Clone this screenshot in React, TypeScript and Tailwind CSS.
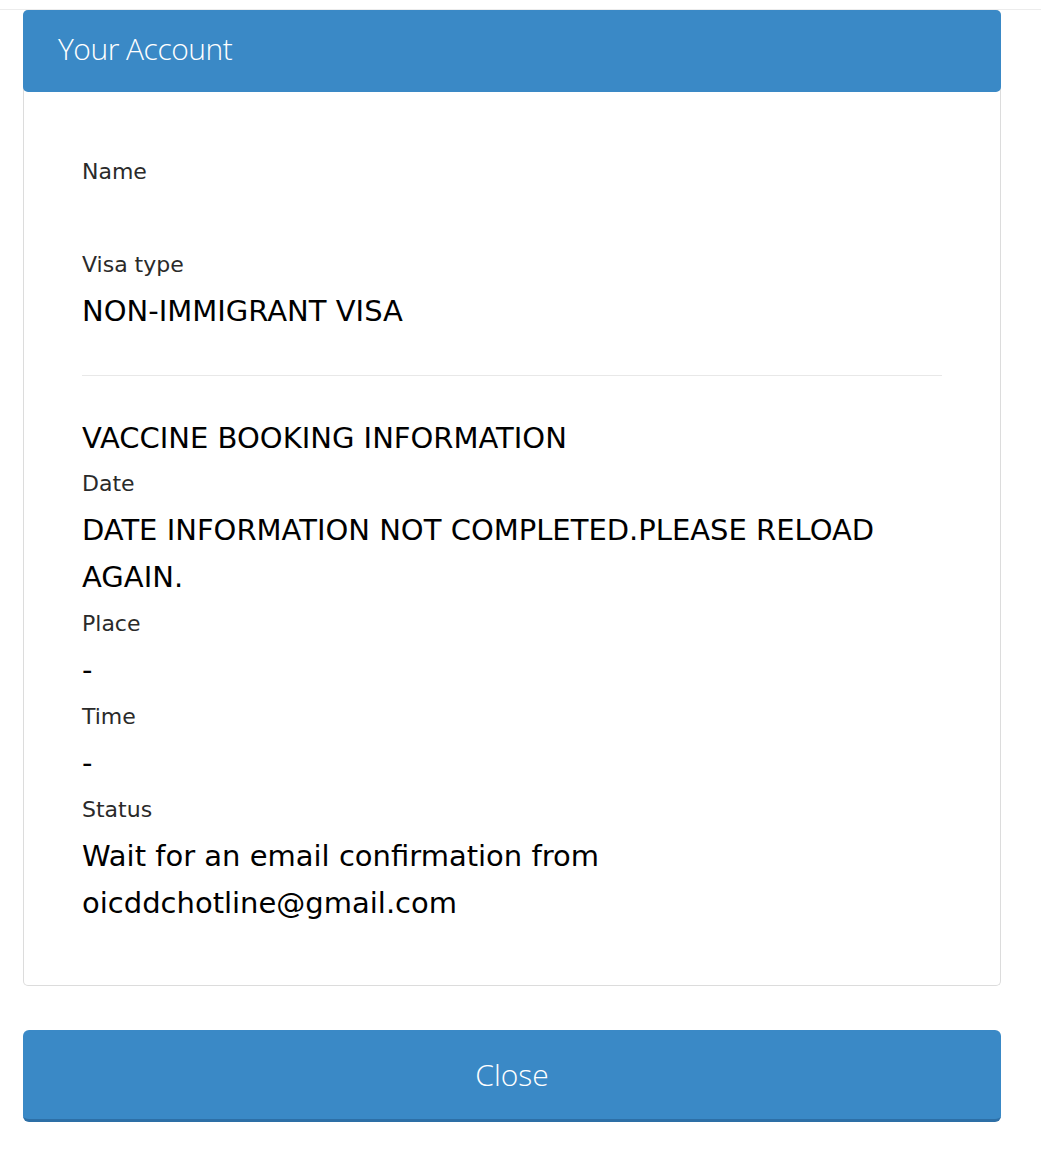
const rows: { label: string; value: string[] }[] = [
  { label: "Date", value: ["DATE INFORMATION NOT COMPLETED.PLEASE RELOAD AGAIN."] },
  { label: "Place", value: ["-"] },
  { label: "Time", value: ["-"] },
  { label: "Status", value: ["Wait for an email confirmation from", "oicddchotline@gmail.com"] },
];

function Label({ children }: { children: React.ReactNode }) {
  return <div className="text-[22px] leading-[46px] text-[#2a2a2a]">{children}</div>;
}

function Value({ children }: { children?: React.ReactNode }) {
  return <div className="min-h-[47px] text-[29px] leading-[47px] text-black">{children}</div>;
}

export default function App() {
  return (
    <div className="min-h-[1152px] bg-white font-['DejaVu_Sans',sans-serif]">
      <div className="h-[10px] border-b border-[#ececec]" />
      <div className="px-[23px] pr-[40px]">
        <div className="rounded-[5px] border border-t-0 border-[#dcdcdc]">
          <div className="-mx-px h-[82px] rounded-[5px] bg-[#3a89c6] px-[35px] pt-[19px] font-['Open_Sans',sans-serif] text-[30px] font-light leading-[40px] tracking-[-0.5px] text-white">
            Your Account
          </div>
          <div className="px-[58px] pt-[57px] pb-[58px]">
            <div className="w-[860px]">
              <Label>Name</Label>
              <Value />
              <Label>Visa type</Label>
              <Value>NON-IMMIGRANT VISA</Value>
              <div className="mt-[40px] mb-[39px] h-px bg-[#e8e8e8]" />
              <div className="text-[29px] leading-[46px] text-black">VACCINE BOOKING INFORMATION</div>
              {rows.map((r) => (
                <div key={r.label}>
                  <Label>{r.label}</Label>
                  {r.value.map((v) => (
                    <Value key={v}>{v}</Value>
                  ))}
                </div>
              ))}
            </div>
          </div>
        </div>
        <button className="mt-[44px] flex h-[92px] w-full items-center justify-center rounded-[6px] border-b-[3px] border-[#2d6fa6] bg-[#3a89c6] font-['Open_Sans',sans-serif] text-[30px] font-light text-white">
          Close
        </button>
      </div>
    </div>
  );
}
